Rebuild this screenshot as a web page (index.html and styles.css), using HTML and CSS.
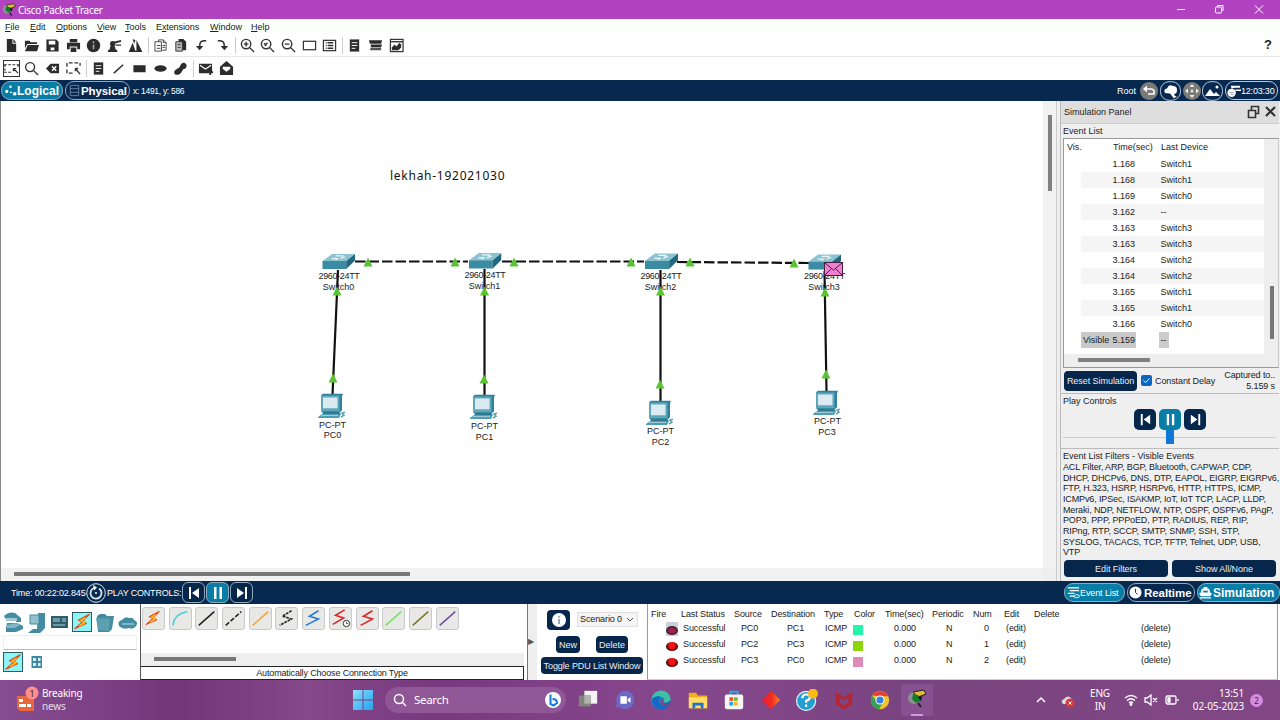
FILE: index.html
```html
<!DOCTYPE html>
<html lang="en">
<head>
<meta charset="utf-8">
<title>Cisco Packet Tracer</title>
<link rel="stylesheet" href="styles.css">
</head>
<body>
<svg class="defs" aria-hidden="true">
  <defs>
    <linearGradient id="edgeg" x1="0" y1="0" x2="1" y2="1"><stop offset="0" stop-color="#35c1b0"/><stop offset=".5" stop-color="#1b86d8"/><stop offset="1" stop-color="#0c59a4"/></linearGradient>
    <linearGradient id="wing" x1="0" y1="0" x2="1" y2="1"><stop offset="0" stop-color="#8be0fb"/><stop offset="1" stop-color="#22a2ee"/></linearGradient>
    <linearGradient id="diag" x1="0" y1="0" x2="1" y2="0"><stop offset="0" stop-color="#e81c30"/><stop offset=".55" stop-color="#f02c20"/><stop offset="1" stop-color="#f98a2c"/></linearGradient>
    <symbol id="switch" viewBox="0 0 34 17" preserveAspectRatio="none"><path d="M.500 8 10.500.500H34L25 8z" fill="#8bc3d2"/><path d="M.500 8H25v8.500H.500z" fill="#3b8ba3"/><path d="M25 8 34 .500v7l-9 9z" fill="#21687e"/><path d="M10 5.500h6l-2 1.500M14 2.500h8l-2 1M19 5.500l5-2" fill="none" stroke="#e9f6f8" stroke-width="1.200"/></symbol>
    <symbol id="pc" viewBox="0 0 28 26" preserveAspectRatio="none"><path d="M3 2 5 0h20l-1 3v14l-3 3H6l-3-2z" fill="#2d819b"/><path d="M3 2h18.500v16H3z" fill="#5fa8bb"/><path d="M5 4h14.500v11H5z" fill="#dcebf2"/><path d="M4 19h17l2 2H5z" fill="#2d7990"/><path d="m0 24 4-3h19l-2 4H0z" fill="#4f9db2"/><path d="m3 22.500 17-.2" stroke="#a5cdd8"/><path d="m27 19-3 1 2 2-3 2" stroke="#4f9db2" stroke-width="1.500" fill="none"/></symbol>
    <symbol id="up" viewBox="0 0 10 10"><path d="M5 .500 9.500 9.500H.5z" fill="#59c332"/></symbol>
    <symbol id="bolt" viewBox="0 0 20 20"><path d="M18 2 6 8.500l4.500 2L2 18l13-6-4-2.500z" fill="#ff9c13" stroke="#dc4b22" stroke-width="1.300" stroke-linejoin="round"/><path d="m14 6-5 3 4 2-6 4" fill="none" stroke="#ffb91c" stroke-width="1.800"/></symbol>
    <symbol id="prev" viewBox="0 0 16 16"><path d="M3 2h2v12H3zM13 3v10L6 8z" fill="#fff"/></symbol>
    <symbol id="pause" viewBox="0 0 16 16"><path d="M4 2h2.500v12H4zM9.500 2H12v12H9.500z" fill="#fff"/></symbol>
    <symbol id="next" viewBox="0 0 16 16"><path d="M11 2h2v12h-2zM3 3v10l7-5z" fill="#fff"/></symbol>
    <symbol id="note" viewBox="0 0 16 16"><path d="M3 1.500h10v13H3z" fill="#2c2c2c"/><path d="M5 5h6M5 8h6M5 11h4" stroke="#fff"/></symbol>
    <symbol id="ptlogo" viewBox="0 0 20 20"><circle cx="7" cy="9" r="6" fill="#8f8f8f"/><path d="M6 3 17 1l2 4-8 3z" fill="#e2bd35" stroke="#222"/><path d="m6 5 5 1 4 5-6 3-4-4z" fill="#167c29"/><path d="m11 8 4-1-1 5z" fill="#111"/><path d="m11 14 3 4" stroke="#222" stroke-width="2"/></symbol>
  </defs>
</svg>

<header class="titlebar">
  <svg class="app-icon" viewBox="0 0 20 20"><use href="#ptlogo"/></svg>
  <h1 class="title">Cisco Packet Tracer</h1>
  <svg class="win-controls" viewBox="0 0 100 19" fill="none" stroke="#fff"><path d="M1 9.500h8"/><rect x="39.500" y="7" width="6" height="6" rx="1"/><path d="M41.500 7V5.500h5.500V11M79 5.500l8 8M87 5.500l-8 8"/></svg>
</header>

<nav class="menubar">
  <span class="m-file"><u>F</u>ile</span><span class="m-edit"><u>E</u>dit</span><span class="m-opt"><u>O</u>ptions</span><span class="m-view"><u>V</u>iew</span><span class="m-tools"><u>T</u>ools</span><span class="m-ext">E<u>x</u>tensions</span><span class="m-win"><u>W</u>indow</span><span><u>H</u>elp</span>
</nav>

<div class="toolbar">
  <svg class="ti" viewBox="0 0 16 16"><path d="M3 1h6v5h4v9H3zM10 1l3 4h-3z"/></svg>
  <svg class="ti" viewBox="0 0 16 16"><path d="M1 3h5l1 1.500h7v2H3.500L1 11z"/><path d="M4 7.500h12L14 14H1z"/></svg>
  <svg class="ti" viewBox="0 0 16 16"><path fill-rule="evenodd" d="M1.500 1.500H12l2.500 2.500v10.500h-13zM4 3v4h7V3zM6 10v3h4v-3z"/></svg>
  <svg class="ti" viewBox="0 0 16 16"><path d="M4 1h8v3.500H4zM1 5h14v7h-3V9H4v3H1zM5 10h6v5H5z"/></svg>
  <svg class="ti" viewBox="0 0 16 16"><circle cx="8" cy="8" r="7.200"/><path d="M8 3.500v2M8 7v5" stroke="#aaa" stroke-width="1.600"/></svg>
  <svg class="ti" viewBox="0 0 16 16"><circle cx="6" cy="6" r="2.800"/><path d="M3 12c0-3 1-4 3-4s3 1 3 4l2 1v2H1v-2zM7 4l8-2v2l-7 2zM9 7h6v1.300H9z"/></svg>
  <svg class="ti" viewBox="0 0 16 16"><path d="m1 14 4-9 3 9zM5 1l3 1.500L6.500 6zM9 14V2l6 12zM1 13.500h14V15H1z"/></svg>
  <i class="sep"></i>
  <svg class="ti" viewBox="0 0 16 16"><path d="M2 4h7v10H2zM6 4V2h5l3 3v8H9M11 2v3h3M4 8h4M4 11h4M10 8h3M10 10h3" fill="none" stroke="#444"/></svg>
  <svg class="ti" viewBox="0 0 16 16"><path d="M6 1h5l3 3v9H6z"/><path d="M3 4h7v10H3z" fill="#bbb" stroke="#333"/><path d="M5 7h3M5 10h3" stroke="#333"/></svg>
  <svg class="ti" viewBox="0 0 16 16"><path d="M13 3c-5-.5-7 1-7 6" fill="none" stroke="#2c2c2c" stroke-width="1.600"/><path d="M2 8.500h8L6 13z"/></svg>
  <svg class="ti" viewBox="0 0 16 16"><path d="M3 3c5-.5 7 1 7 6" fill="none" stroke="#2c2c2c" stroke-width="1.600"/><path d="M6 8.500h8L10 13z"/></svg>
  <i class="sep"></i>
  <svg class="ti" viewBox="0 0 16 16" fill="none" stroke="#333" stroke-width="1.500"><circle cx="6.500" cy="6.500" r="5"/><path d="m10 10 5 5M4 6.500h5M6.500 4v5"/></svg>
  <svg class="ti" viewBox="0 0 16 16" fill="none" stroke="#333" stroke-width="1.500"><circle cx="6.500" cy="6.500" r="5"/><path d="m10 10 5 5M5 8l3-3M4.500 5.500l2 3"/></svg>
  <svg class="ti" viewBox="0 0 16 16" fill="none" stroke="#333" stroke-width="1.500"><circle cx="6.500" cy="6.500" r="5"/><path d="m10 10 5 5M4 6.500h5"/></svg>
  <svg class="ti" viewBox="0 0 16 16"><rect x="1.500" y="3.500" width="13" height="9" fill="#fff" stroke="#333" stroke-width="1.300"/></svg>
  <svg class="ti" viewBox="0 0 16 16"><rect x="1.500" y="2.500" width="13" height="11" fill="#fff" stroke="#333" stroke-width="1.300"/><path d="M4 5h1M4 8h1M4 11h1M6 5h6M6 8h6M6 11h6" stroke="#333" stroke-width="1.500"/></svg>
  <i class="sep"></i>
  <svg class="ti" viewBox="0 0 16 16"><use href="#note"/></svg>
  <svg class="ti" viewBox="0 0 16 16"><path d="M1 2.500h14L14 6H2z"/><path d="M3 7h12l-1 2.500H3z"/><path d="M3 10h11v3H2z" fill="#555"/></svg>
  <svg class="ti" viewBox="0 0 16 16"><rect x="1.500" y="1.500" width="13.500" height="13" fill="#fff" stroke="#333" stroke-width="1.300"/><path d="M2 4h13" stroke="#333" stroke-width="1.500"/><path d="M3 13v-3l3-3 2 2 3-4 2 2v3l-3 3z"/></svg>
  <b class="help">?</b>
</div>

<div class="toolbar second">
  <svg class="ti picked" viewBox="0 0 16 16" fill="none" stroke="#333" stroke-width="1.300"><path d="M0 4h16M0 12h9" stroke-dasharray="3 1.500"/><path d="M1 4v8M15 4v4" stroke-dasharray="2 2"/><path d="m10 8 5 5M10 8v3M10 8h3"/></svg>
  <svg class="ti" viewBox="0 0 16 16" fill="none" stroke="#333" stroke-width="1.500"><circle cx="6.500" cy="6.500" r="4.800"/><path d="m10 10 5 5"/></svg>
  <svg class="ti" viewBox="0 0 16 16"><path d="m1 8 5-5h9v10H6z"/><path d="m7.500 5.500 4.500 5M12 5.500l-4.500 5" stroke="#fff" stroke-width="1.500"/></svg>
  <svg class="ti" viewBox="0 0 16 16" fill="none" stroke="#333" stroke-width="1.400"><path d="M1 6V2h14v3M1 9v4h8" stroke-dasharray="4 2"/><path d="m10 8 5 6M10 8v3M10 8h3"/></svg>
  <i class="sep"></i>
  <svg class="ti" viewBox="0 0 16 16"><use href="#note"/></svg>
  <svg class="ti" viewBox="0 0 16 16"><path d="M3 13 13 4" stroke="#333" stroke-width="1.700"/></svg>
  <svg class="ti" viewBox="0 0 16 16"><rect x="1.500" y="4.500" width="13" height="7.500"/></svg>
  <svg class="ti" viewBox="0 0 16 16"><ellipse cx="8" cy="8" rx="6.500" ry="3.500"/></svg>
  <svg class="ti" viewBox="0 0 16 16"><path d="M9 3c3-3 7 1 5 4-1 2-3 1-4 3-1 4-6 6-8 4-2-3 1-5 3-6 3-1 2-3 4-5z"/></svg>
  <i class="sep"></i>
  <svg class="ti" viewBox="0 0 16 16"><path d="M1 3h14v8h1v2h-2v2h-2v-2H1z"/><path d="m2 4.500 6 4 6-4" fill="none" stroke="#fff" stroke-width="1.200"/></svg>
  <svg class="ti" viewBox="0 0 16 16"><path d="m8 0 7 6v9H1V6z"/><path d="M4 6h8v2.500l-4 3-4-3z" fill="#fff"/></svg>
</div>

<div class="navybar views">
  <div class="tab on logical"><svg viewBox="0 0 14 14"><circle cx="3" cy="8" r="1.700"/><circle cx="7" cy="3" r="1.300"/><circle cx="7.500" cy="9" r="1"/><circle cx="11.500" cy="10.500" r="2"/></svg>Logical</div>
  <div class="tab physical"><svg viewBox="0 0 14 14" fill="none" stroke="#6681a0"><path d="M2.500 1.500h9v11h-9zM2 5h10M2 9h10"/></svg>Physical</div>
  <span class="coords">x: 1491, y: 586</span>
  <span class="root">Root</span>
  <svg class="nav-tools" viewBox="0 0 86 20"><circle cx="10" cy="10" r="9" fill="#7b7a76"/><path d="M8 4.500 4 8l4 3.500z" fill="#fff"/><path d="M6 8h6q4 0 3 5H9" fill="none" stroke="#fff" stroke-width="1.600"/><rect x="21.500" y=".7" width="20" height="18.600" rx="8.500" fill="none" stroke="#b6c6d6"/><path d="M26 12q-2-4 2-4.500 2-5 6-2.500 4 0 4 4t-3 4l1 2h2l-3 2.500-4-5z" fill="#fff"/><circle cx="53" cy="10" r="9" fill="#7b7a76"/><path d="m53 3 2.500 3h-5zM53 17l2.500-3h-5zM46 10l3-2.500v5zM60 10l-3-2.500v5z" fill="#eee"/><circle cx="53" cy="10" r="1.600" fill="#ddd"/><rect x="63.500" y=".7" width="20" height="18.600" rx="8.500" fill="none" stroke="#b6c6d6"/><path d="m66 15 5-7 4 5 2-2 4 4z" fill="#fff"/><circle cx="78" cy="6" r="1.500" fill="#fff"/></svg>
  <div class="clock"><svg viewBox="0 0 16 16"><circle cx="6" cy="10.500" r="4.500" fill="#fff"/><path d="M4 10h4M5 12h3" fill="none" stroke="#8b9bb0"/><path d="M5 3h10v2H9L6 6zM10 7h6v1.500h-6z" fill="#fff"/></svg>12:03:30</div>
</div>

<main class="main">
  <section class="workspace">
    <svg class="canvas" viewBox="1 101 1042 467">
      <g stroke="#111" stroke-width="2.200" stroke-dasharray="10.500 3" fill="none"><path d="M355 261.500H468M502 261.500H644M677 262l132 1"/></g>
      <g><use href="#switch" x="322" y="253.500" width="33" height="16"/><use href="#switch" x="468.500" y="252.500" width="33" height="16.500"/><use href="#switch" x="644.500" y="253" width="33.500" height="16.500"/><use href="#switch" x="808" y="254" width="33" height="16"/></g>
      <g class="label"><text class="model" x="339" y="278.500">2960-24TT</text><text x="338.500" y="289.500">Switch0</text><text class="model" x="485" y="278">2960-24TT</text><text x="484.500" y="289">Switch1</text><text class="model" x="661" y="278.500">2960-24TT</text><text x="660.500" y="290">Switch2</text><text class="model" x="824.500" y="279">2960-24TT</text><text x="824" y="290">Switch3</text><text x="332.500" y="427.500">PC-PT</text><text x="332.500" y="438">PC0</text><text x="484.500" y="428.500">PC-PT</text><text x="484.500" y="439.500">PC1</text><text x="660.500" y="434">PC-PT</text><text x="660.500" y="445">PC2</text><text x="827.500" y="424">PC-PT</text><text x="827" y="435">PC3</text></g>
      <path d="M338 270 332.500 395M484.500 269V395M660.500 270V401M824.500 271 826.500 391" stroke="#111" stroke-width="2.200" fill="none"/>
      <g><use href="#pc" x="318" y="393.500" width="28" height="25.500"/><use href="#pc" x="470" y="394.500" width="28" height="25.500"/><use href="#pc" x="646" y="400.500" width="28" height="25.500"/><use href="#pc" x="813" y="390.500" width="28" height="25.500"/></g>
      <g><use href="#up" x="363" y="257" width="10" height="10"/><use href="#up" x="450" y="257" width="10" height="10"/><use href="#up" x="509" y="257" width="10" height="10"/><use href="#up" x="626" y="257" width="10" height="10"/><use href="#up" x="685" y="257" width="10" height="10"/><use href="#up" x="789" y="258" width="10" height="10"/><use href="#up" x="332" y="286" width="10" height="10"/><use href="#up" x="479.500" y="286" width="10" height="10"/><use href="#up" x="655.500" y="286" width="10" height="10"/><use href="#up" x="820" y="287" width="10" height="10"/><use href="#up" x="328" y="373" width="10" height="10"/><use href="#up" x="479" y="374" width="10" height="10"/><use href="#up" x="655" y="379" width="10" height="10"/><use href="#up" x="821" y="369" width="10" height="10"/></g>
      <rect x="824.500" y="262.500" width="18" height="13" fill="#ed80cf" stroke="#4a1e42"/><path d="m825 263 8.500 7 8.500-7M825 275l6-6M842 275l-6-6" fill="none" stroke="#4a1e42"/>
      <text class="note" x="390" y="179.500" textLength="114.500">lekhah-192021030</text>
    </svg>
    <div class="vscroll"><i></i></div>
    <div class="hscroll"><i></i></div>
  </section>

  <aside class="panel">
    <header class="panel-head"><span>Simulation Panel</span><svg viewBox="0 0 30 14" fill="none" stroke="#333"><path d="M1.500 5.500h7v7h-7zM4.500 5V1.500h7v7H9" stroke-width="1.600"/><path d="m19 2 9 9M28 2l-9 9" stroke-width="2.200"/></svg></header>
    <h2 class="sub">Event List</h2>
    <div class="events">
      <div class="rows">
        <div class="ev head"><span>Vis.</span><span>Time(sec)</span><span>Last Device</span></div>
        <div class="ev"><span></span><span>1.168</span><span>Switch1</span></div>
        <div class="ev"><span></span><span>1.168</span><span>Switch1</span></div>
        <div class="ev"><span></span><span>1.169</span><span>Switch0</span></div>
        <div class="ev"><span></span><span>3.162</span><span>--</span></div>
        <div class="ev"><span></span><span>3.163</span><span>Switch3</span></div>
        <div class="ev"><span></span><span>3.163</span><span>Switch3</span></div>
        <div class="ev"><span></span><span>3.164</span><span>Switch2</span></div>
        <div class="ev"><span></span><span>3.164</span><span>Switch2</span></div>
        <div class="ev"><span></span><span>3.165</span><span>Switch1</span></div>
        <div class="ev"><span></span><span>3.165</span><span>Switch1</span></div>
        <div class="ev"><span></span><span>3.166</span><span>Switch0</span></div>
        <div class="ev current"><span>Visible</span><span>5.159</span><span><em>--</em></span></div>
      </div>
      <div class="ev-v"><i></i></div>
      <div class="ev-h"><i></i></div>
    </div>
    <div class="reset-row">
      <button class="btn reset">Reset Simulation</button>
      <svg class="check" viewBox="0 0 11 11"><rect width="11" height="11" rx="2" fill="#0f66c0"/><path d="m2.500 5.500 2 2 4-4" fill="none" stroke="#fff"/></svg>
      <span class="delay">Constant Delay</span>
      <span class="captured">Captured to..<br>5.159 s</span>
    </div>
    <div class="play">
      <h2 class="sub">Play Controls</h2>
      <div class="play-btns"><button class="pb"><svg viewBox="0 0 16 16"><use href="#prev"/></svg></button><button class="pb on"><svg viewBox="0 0 16 16"><use href="#pause"/></svg></button><button class="pb"><svg viewBox="0 0 16 16"><use href="#next"/></svg></button></div>
      <div class="slider"><i></i></div>
    </div>
    <div class="filters">
      <h2 class="sub">Event List Filters - Visible Events</h2>
      <p>ACL Filter, ARP, BGP, Bluetooth, CAPWAP, CDP,<br>DHCP, DHCPv6, DNS, DTP, EAPOL, EIGRP, EIGRPv6,<br>FTP, H.323, HSRP, HSRPv6, HTTP, HTTPS, ICMP,<br>ICMPv6, IPSec, ISAKMP, IoT, IoT TCP, LACP, LLDP,<br>Meraki, NDP, NETFLOW, NTP, OSPF, OSPFv6, PAgP,<br>POP3, PPP, PPPoED, PTP, RADIUS, REP, RIP,<br>RIPng, RTP, SCCP, SMTP, SNMP, SSH, STP,<br>SYSLOG, TACACS, TCP, TFTP, Telnet, UDP, USB,<br>VTP</p>
      <div class="filter-btns"><button class="btn">Edit Filters</button><button class="btn">Show All/None</button></div>
    </div>
  </aside>
</main>

<div class="navybar controls">
  <span class="time">Time: 00:22:02.845</span>
  <svg class="cycle" viewBox="0 0 20 20" fill="none" stroke="#dce6ef"><circle cx="10" cy="10" r="9.300"/><path d="M8 5a5.500 5.500 0 1 0 5 .5" stroke-width="1.800"/><path d="m7 2 4 2.500-3 3z" fill="#fff" stroke="none"/><circle cx="10" cy="10" r=".7" fill="#fff"/></svg>
  <span class="pc-label">PLAY CONTROLS:</span>
  <button class="rb"><svg viewBox="0 0 16 16"><use href="#prev"/></svg></button><button class="rb on"><svg viewBox="0 0 16 16"><use href="#pause"/></svg></button><button class="rb"><svg viewBox="0 0 16 16"><use href="#next"/></svg></button>
  <div class="modes">
    <div class="tab on evl"><svg viewBox="0 0 14 14" fill="none" stroke="#fff"><path d="M1 2h12M3 5h10M1 8h7M3 11h5" stroke-width="1.300"/><ellipse cx="10.500" cy="11" rx="3" ry="1.600"/></svg>Event List</div>
    <div class="tab real"><svg viewBox="0 0 14 14"><circle cx="7" cy="7" r="6.500"/><path d="M7 3v4l2 2" fill="none" stroke="#0a2a50"/></svg>Realtime</div>
    <div class="tab on sim"><svg viewBox="0 0 14 14"><path d="M5 1h4v2h2l1 4 2 1-2 3H2L0 8l2-1 1-4h2zM1 12h12v1.500H1z"/><path d="M4.500 5h5v2h-5z" fill="#0b7fa8"/></svg>Simulation</div>
  </div>
</div>

<section class="bottom">
  <div class="devices">
    <svg class="dev-row" viewBox="0 0 140 40"><path d="M4 12q5-5 11-3l6 5v4h-5v-4H9l-2 3z" fill="#438ca1"/><path d="M6 14h11v3H6z" fill="#9ecbd4"/><path d="M7 19h10l6 3v3l-7 3H6v-4z" fill="#438ca1"/><path d="m7 21 9-2 4 2-5 3H7z" fill="#7fb6c4"/><g fill="#438ca1"><path d="M38 9h7v15l-5 5H28l5-4h4z"/><path d="M30 11h9v9h-9z" fill="#91c1ce" stroke="#438ca1"/><path d="M51 12h17v12H51z" fill="#315d6b"/><path d="M53 14h7v4h-7zM62 14h4v4h-4zM53 20h12v2H53z" fill="#6c9aa5"/><path d="m97 12 3-2h5l2 2h7l-2 13-3 3H98z"/><path d="m96 14 14 1-1 12-11-1z" fill="#5c9fb0"/><path d="M119 22q-2-5 3-6 3-4 7-2 4-1 5 2 5 2 2 6-3 4-7 2-6 2-10-2z"/><path d="M122 20h12" stroke="#7fb6c4" stroke-width="2"/></g><rect x="72.500" y="8.500" width="19" height="19" fill="#8ff4f5" stroke="#285e68"/><use href="#bolt" x="73" y="8" width="18" height="19"/></svg>
    <div class="dev-blank"></div>
    <svg class="dev-row low" viewBox="0 0 140 30"><rect x="3.500" y="1.500" width="19" height="19" fill="#8ff4f5" stroke="#285e68"/><use href="#bolt" x="4" y="2" width="18" height="18"/><path d="M31.500 5h10.500v12H31.500z" fill="#3d88a3"/><path d="M33 7h3v3h-3zM38 7h2.500v3H38zM33 12h3v3h-3zM38 12h2.500v3H38z" fill="#d8ecf1"/></svg>
  </div>
  <div class="connections">
    <div class="wires">
      <svg viewBox="0 0 23 23"><use href="#bolt" x="1" y="2" width="19" height="18"/></svg>
      <svg viewBox="0 0 23 23"><path d="M3 19Q5 6 19 4" stroke="#50cfd9"/></svg>
      <svg viewBox="0 0 23 23"><path d="M3 19 20 4" stroke="#222"/></svg>
      <svg viewBox="0 0 23 23"><path d="M3 19 20 4" stroke="#222" stroke-dasharray="5 2"/></svg>
      <svg viewBox="0 0 23 23"><path d="M3 19 20 4" stroke="#efa43a"/></svg>
      <svg viewBox="0 0 23 23"><path d="m17 3-10 6 10 3-13 7" stroke="#222" stroke-dasharray="3 1"/></svg>
      <svg viewBox="0 0 23 23"><path d="m17 3-10 6 10 3L3 19" stroke="#2779d3"/></svg>
      <svg viewBox="0 0 23 23"><path d="m16 2-10 6 9 3L3 18" stroke="#dc2727"/><circle cx="18" cy="17" r="3.500" fill="#fff" stroke="#222" stroke-width="1"/><path d="M18 15v2h2" stroke="#222" stroke-width=".8"/></svg>
      <svg viewBox="0 0 23 23"><path d="m17 3-10 6 10 3L4 19" stroke="#dc2727"/></svg>
      <svg viewBox="0 0 23 23"><path d="M3 19 20 4" stroke="#76e45c"/></svg>
      <svg viewBox="0 0 23 23"><path d="M3 19 20 4" stroke="#777a28"/></svg>
      <svg viewBox="0 0 23 23"><path d="M3 19 20 4" stroke="#7250a4"/></svg>
    </div>
    <div class="wire-scroll"><i></i></div>
    <div class="wire-name">Automatically Choose Connection Type</div>
  </div>
  <div class="splitter">▶</div>
  <div class="scenario">
    <div class="sc-row"><button class="btn info"><svg viewBox="0 0 16 16"><circle cx="8" cy="8" r="7" fill="#fff"/><path d="M8 4v1.500M8 7v5" stroke="#617b98" stroke-width="1.300"/></svg></button><div class="select">Scenario 0<svg viewBox="0 0 8 6" fill="none" stroke="#555"><path d="m1 1 3 3 3-3"/></svg></div></div>
    <div class="sc-row two"><button class="btn new">New</button><button class="btn del">Delete</button></div>
    <button class="btn toggle">Toggle PDU List Window</button>
  </div>
  <div class="pdu">
    <div class="pr ph"><span>Fire</span><span>Last Status</span><span>Source</span><span>Destination</span><span>Type</span><span>Color</span><span>Time(sec)</span><span>Periodic</span><span>Num</span><span>Edit</span><span>Delete</span></div>
    <div class="pr"><span class="fire first"><i></i></span><span>Successful</span><span>PC0</span><span>PC1</span><span>ICMP</span><span><i class="sw mint"></i></span><span>0.000</span><span>N</span><span>0</span><span>(edit)</span><span>(delete)</span></div>
    <div class="pr"><span class="fire"><i></i></span><span>Successful</span><span>PC2</span><span>PC3</span><span>ICMP</span><span><i class="sw lime"></i></span><span>0.000</span><span>N</span><span>1</span><span>(edit)</span><span>(delete)</span></div>
    <div class="pr"><span class="fire"><i></i></span><span>Successful</span><span>PC3</span><span>PC0</span><span>ICMP</span><span><i class="sw pink"></i></span><span>0.000</span><span>N</span><span>2</span><span>(edit)</span><span>(delete)</span></div>
  </div>
</section>

<footer class="taskbar">
  <svg class="news" viewBox="0 0 26 28"><path d="M3 11h17v15H6l-3-3z" fill="#e8673d"/><path d="M5 14h4v3H5zM5 19h7v3H5zM13 19h4v3h-4z" fill="#fff"/><circle cx="18" cy="8" r="6.500" fill="#ff8f8c"/><text x="18" y="11.500" text-anchor="middle" font-size="9" fill="#4b2020">1</text></svg>
  <div class="news-text">Breaking<br><span>news</span></div>
  <svg class="start" viewBox="0 0 20 20"><path d="M0 0h9.500v9.500H0zM10.500 0H20v9.500h-9.500zM0 10.500h9.500V20H0zM10.500 10.500H20V20h-9.500z" fill="url(#wing)"/></svg>
  <div class="search"><svg viewBox="0 0 14 14" fill="none" stroke="#fff" stroke-width="1.500"><circle cx="6" cy="6" r="4.500"/><path d="m9 9 4 4"/></svg><span>Search</span><svg class="bing" viewBox="0 0 18 18"><circle cx="9" cy="9" r="8" fill="#f7fbff"/><path d="M6.500 3.500v9.500l3 1.500 3.500-2.500c0-3-2-4-4.500-4" fill="none" stroke="#1678d8" stroke-width="2"/></svg></div>
  <div class="apps">
    <svg viewBox="0 0 24 24"><path d="M8 2h14v14H8z" fill="#f4f4f4"/><path d="M2 7h13v12H2z" fill="#82847f"/><path d="M8 7h7v9H8z" fill="#b2b5ae"/></svg>
    <svg viewBox="0 0 24 24"><path d="M12 2a10 10 0 1 1-7 17l-3 2 1-6a10 10 0 0 1 9-13z" fill="#6d68c6"/><path d="M7 8h7v8H7zM15 11l3-2v6l-3-2z" fill="#fff"/></svg>
    <svg viewBox="0 0 24 24"><circle cx="12" cy="12" r="10.500" fill="url(#edgeg)"/><path d="M1.500 13Q2 3 12 1.500q9 .5 10.500 9-1 5-8 4 3-4-2-6-6-2-11 4.500z" fill="#3cc2a2"/><path d="M2 11q5-5 10-2-5 4 0 9 4 3 8 0-6 7-13 3-5-4-5-10z" fill="#1668c2"/><path d="M12.500 10q3 1 1 4 3 3 8 1l-2 3q-6 1-8-2-1-3 1-6z" fill="#7e4487"/></svg>
    <svg viewBox="0 0 24 24"><path d="M2 4h8l2 3h10v14H2z" fill="#f2ad1d"/><path d="M2 9h20v12H2z" fill="#ffdb68"/><path d="M6 15h12v6h-3v-3H9v3H6z" fill="#1975d0"/></svg>
    <svg viewBox="0 0 24 24"><path d="M8 7V3h8v4" fill="none" stroke="#2daae5" stroke-width="2"/><rect x="2" y="6" width="20" height="16" rx="2" fill="#f6f5f2"/><path d="M7 9h4v4H7z" fill="#ef5427"/><path d="M12 9h4v4h-4z" fill="#7cb53a"/><path d="M7 14h4v4H7z" fill="#25a2dc"/><path d="M12 14h4v4h-4z" fill="#f5b729"/></svg>
    <svg viewBox="0 0 24 24"><path d="m12 2 10 10-10 10L2 12z" fill="url(#diag)"/></svg>
    <svg viewBox="0 0 24 24"><circle cx="11" cy="13" r="11" fill="#e6f5fb"/><circle cx="11" cy="13" r="9.700" fill="#249ed4"/><path d="M7 10q0-4 4-4 5 0 4 4-1 2-4 3v2M11 17v2.500" fill="none" stroke="#fff" stroke-width="2.400"/><circle cx="18.500" cy="5" r="5.500" fill="#fbb914"/></svg>
    <svg viewBox="0 0 24 24"><path d="m3 3 9 6 9-6v14l-9 5-9-5zM7 9v6l5 3 5-3V9l-5 3z" fill="#b62631" fill-rule="evenodd"/></svg>
    <svg viewBox="0 0 24 24"><circle cx="12" cy="12" r="10" fill="#f2c42d"/><path d="M3.300 7A10 10 0 0 1 21 8h-9z" fill="#e64132"/><path d="M3.300 7A10 10 0 0 0 11 22l4-7-6-1z" fill="#34a154"/><circle cx="12" cy="12" r="5" fill="#fff"/><circle cx="12" cy="12" r="3.900" fill="#367fe5"/></svg>
    <div class="running"><svg viewBox="0 0 20 20"><use href="#ptlogo"/></svg></div>
  </div>
  <svg class="tray" viewBox="0 0 40 20"><path d="m2 12 4-4 4 4" fill="none" stroke="#fff" stroke-width="1.500"/><path d="M28 14q-3-3 1-5 4-5 8 0l2 5z" fill="#ddd"/><circle cx="35" cy="13" r="4.500" fill="#d43b40"/><path d="m33.500 11.500 3 3M36.500 11.500l-3 3" stroke="#fff"/></svg>
  <div class="lang">ENG<br>IN</div>
  <svg class="status" viewBox="0 0 56 16" fill="none" stroke="#fff" stroke-width="1.300"><path d="M2 6q6-5 12 0M4 8.500q4-3.500 8 0M6 11q2-2 4 0"/><circle cx="8" cy="12.500" r=".8" fill="#fff"/><path d="M22 6h2l4-3v10l-4-3h-2zM30 6l4 4M34 6l-4 4"/><rect x="43" y="4" width="10" height="8" rx="1.500"/><path d="M45 6h2v4h-2zM55 7v2" fill="#fff"/></svg>
  <div class="date">13:51<br>02-05-2023</div>
  <div class="count">2</div>
</footer>
</body>
</html>
```
FILE: styles.css
```css
* { box-sizing: border-box; }
body { margin: 0; width: 1280px; height: 720px; overflow: hidden; background: #fff; color: #222; font: 9px/12px "Liberation Sans", Arial, sans-serif; display: flex; flex-direction: column; }
svg { display: block; flex: none; }
button { font: inherit; border: 0; padding: 0; display: flex; align-items: center; justify-content: center; flex: none; }
h1, h2, p { margin: 0; font: inherit; }
.defs { position: absolute; width: 0; height: 0; }

.titlebar { height: 19px; flex: none; background: #b143c1; color: #fff; display: flex; align-items: center; padding-left: 2px; }
.app-icon { width: 14px; height: 14px; }
.title { font: 10px/18px "Noto Sans", sans-serif; letter-spacing: -.28px; margin-left: 2px; }
.win-controls { width: 100px; height: 19px; margin-left: auto; margin-right: 4px; }
.menubar { height: 15px; flex: none; display: flex; align-items: center; padding-left: 5px; background: #fbfffa; }
.menubar span { white-space: nowrap; }
.m-file { width: 25px; } .m-edit { width: 26px; } .m-opt { width: 41px; } .m-view { width: 28px; } .m-tools { width: 31px; } .m-ext { width: 54px; letter-spacing: -.1px; } .m-win { width: 41px; }
.toolbar { height: 23px; flex: none; display: flex; align-items: center; border-bottom: 1px solid #e6e6e6; padding-left: 3.500px; }
.ti { width: 15px; height: 15px; margin-right: 5.700px; fill: #2c2c2c; }
.ti[fill="none"] { fill: none; }
.sep { width: 1px; height: 17px; background: #ccc; margin: 0 4px 0 -.700px; }
.help { margin: 0 8px 0 auto; font-size: 13px; }
.second { border: 0; }
.picked { outline: 1px solid #333; }

.navybar { background: #08294f; color: #fff; display: flex; align-items: center; flex: none; }
.views { height: 21px; }
.tab { border: 1px solid #8fa9bf; border-radius: 9px; display: flex; align-items: center; font-weight: bold; color: #fff; height: 19px; white-space: nowrap; flex: none; }
.tab svg { width: 13px; height: 13px; fill: #fff; }
.tab svg[fill="none"] { fill: none; }
.on { background: #087da6; }
.logical { width: 62px; font-size: 12px; padding-left: 2px; margin-left: 1px; }
.physical { width: 65px; margin-left: 2px; font-size: 11.500px; padding-left: 2px; letter-spacing: -.1px; }
.coords { margin-left: 3px; font-size: 8.500px; letter-spacing: -.3px; }
.root { margin-left: auto; margin-right: 3px; }
.nav-tools { width: 86px; height: 20px; }
.clock { width: 53px; height: 19px; border: 1px solid #b6c6d6; border-radius: 9px; display: flex; align-items: center; letter-spacing: -.2px; margin-right: 2px; }
.clock svg { width: 15px; height: 15px; }

.main { height: 480px; flex: none; display: flex; background: #efefef; }
.workspace { width: 1057px; border-left: 1px solid #888; border-right: 1px solid #ccc; display: grid; grid-template: 467px 13px / 1042px 13px; background: #eee; flex: none; }
.canvas { width: 1042px; height: 467px; background: #fff; }
.label { font-size: 9px; text-anchor: middle; fill: #222; }
.model { letter-spacing: -.35px; }
.note { font: 12px "Noto Sans", sans-serif; fill: #111; }
.vscroll { background: #f2f2f2; padding: 14px 4px 0 5px; }
.vscroll i { display: block; height: 76px; background: #808080; }
.hscroll { background: #f2f2f2; padding: 4px 0 0 13px; }
.hscroll i { display: block; width: 396px; height: 4px; background: #777; }

.panel { width: 219px; margin-left: 3px; border-left: 1px solid #bbb; display: flex; flex-direction: column; flex: none; }
.panel-head { height: 23px; background: #dedede; display: flex; align-items: center; justify-content: space-between; padding: 0 2px 0 3px; border-bottom: 1px solid #ccc; flex: none; }
.panel-head svg { width: 30px; height: 14px; }
.sub { height: 14px; line-height: 14px; padding-left: 2px; flex: none; }
.events { height: 230px; width: 216px; margin-left: 2px; border: 1px solid #999; border-right-color: #ccc; flex: none; display: grid; grid-template: 215px 13px / 200px 14px; background: #eee; }
.rows { background: #fff; }
.ev { height: 16px; margin-left: 17px; display: grid; grid-template-columns: 31.500px 48px 1fr; line-height: 16px; }
.ev.head { height: 17px; margin-left: 3px; grid-template-columns: 46px 48px 1fr; }
.ev:nth-child(odd):not(.head) { background: #f5f5f5; }
.ev.current { background: #fff; }
.ev.current:nth-child(odd) { background: #fff; }
.ev.current span:nth-child(-n+2) { background: #c9c9c9; }
.ev.current span:nth-child(1) { padding-left: 2px; }
.ev.current span:nth-child(2) { width: 23px; }
.ev.current em { background: #ccc; font-style: normal; display: inline-block; padding: 0 2px; margin-left: -2px; }
.ev-v { padding: 147px 5px 0 6px; }
.ev-v i { display: block; height: 53px; width: 4px; background: #777; }
.ev-h { padding: 4px 0 0 14px; }
.ev-h i { display: block; height: 4px; width: 72px; background: #808080; }
.btn { background: #07264b; color: #e9eff5; border-radius: 4px; white-space: nowrap; }
.reset-row { height: 26px; display: flex; align-items: center; border-bottom: 1px solid #bbb; padding: 0 4px 0 3px; flex: none; }
.reset { width: 73px; height: 20px; letter-spacing: -.05px; }
.check { width: 11px; height: 11px; margin: 0 3px 0 4px; }
.delay { letter-spacing: -.1px; }
.captured { margin-left: auto; text-align: right; line-height: 10.500px; white-space: nowrap; letter-spacing: -.1px; }
.play { height: 55px; border-bottom: 1px solid #bbb; flex: none; }
.play-btns { display: flex; gap: 3px; padding-left: 73px; margin-top: 1px; }
.pb { width: 22px; height: 21px; border-radius: 5px; background: #07264b; }
.pb svg { width: 15px; height: 15px; }
.pb.on, .rb.on { background: #087da6; }
.slider { height: 15px; padding-left: 105px; background: linear-gradient(#ccc, #ccc) 2px 7px / 213px 1px no-repeat; }
.slider i { display: block; width: 8px; height: 14px; background: #0f78d4; }
.filters .sub { height: 13px; line-height: 15px; }
.filters p { padding-left: 2px; line-height: 10.670px; height: 98px; letter-spacing: -.13px; white-space: nowrap; }
.filter-btns { display: flex; gap: 4px; padding-left: 3px; }
.filter-btns .btn { width: 104px; height: 17px; letter-spacing: -.05px; }

.controls { height: 23px; padding-left: 11px; }
.time { width: 75px; white-space: nowrap; letter-spacing: -.15px; }
.cycle { width: 20px; height: 20px; }
.pc-label { width: 76px; padding-left: 1px; white-space: nowrap; letter-spacing: -.2px; }
.rb { width: 23px; height: 21px; margin-right: 1px; border: 1px solid #8fa9bf; border-radius: 6px; background: #07264b; }
.rb svg { width: 16px; height: 16px; }
.modes { margin-left: auto; display: flex; gap: 2px; }
.evl { width: 61px; font-weight: normal; padding-left: 2px; letter-spacing: -.1px; }
.real { width: 68px; font-size: 11.500px; padding-left: 1px; gap: 2px; letter-spacing: -.05px; }
.sim { width: 83px; font-size: 12px; padding-left: 1px; gap: 1px; }

.bottom { height: 76px; flex: none; display: flex; background: #fff; overflow: hidden; }
.devices { width: 140px; flex: none; }
.dev-row { width: 140px; height: 30px; }
svg.dev-row:first-child { height: 40px; margin-bottom: -9px; }
.dev-blank { height: 15px; margin: 0 3px; border: 1px solid #eee; border-bottom-color: #bbb; }
.low { margin-top: 1px; }
.connections { width: 384px; border-left: 1px solid #555; flex: none; display: flex; flex-direction: column; }
.wires { height: 49px; display: flex; gap: 3.700px; padding: 3px 0 0 1px; }
.wires svg { width: 23px; height: 23px; border: 1px solid #c9c9c9; border-radius: 3px; background: #e8e8e6; fill: none; stroke-width: 1.700; }
.wire-scroll { height: 13px; background: #eee; padding: 4px 0 0 13px; }
.wire-scroll i { display: block; width: 82px; height: 4px; background: #777; }
.wire-name { height: 14px; border: 1px solid #222; border-left: 0; text-align: center; background: #fff; letter-spacing: -.15px; }
.splitter { width: 10px; margin-left: 3px; border-left: 1px solid #777; background: #eee; font: 8px/76px "DejaVu Sans", sans-serif; color: #555; flex: none; }
.scenario { width: 110px; padding: 5px 0 0 4px; flex: none; }
.sc-row { display: flex; align-items: center; height: 21px; padding-left: 6px; }
.info { width: 23px; height: 20px; }
.info svg { width: 16px; height: 16px; }
.select { margin-left: 7px; width: 61px; height: 15px; background: #f4f4f4; border: 1px solid #e0e0e0; line-height: 13px; padding: 0 3px 0 2px; display: flex; align-items: center; justify-content: space-between; white-space: nowrap; letter-spacing: -.1px; }
.select svg { width: 8px; height: 6px; }
.two { height: 25px; padding: 2px 0 0 15px; margin-top: 1px; }
.new { width: 24px; height: 17px; }
.del { width: 32px; height: 17px; margin-left: 16px; }
.toggle { width: 102px; height: 17px; margin-top: 1px; letter-spacing: -.1px; }
.pdu { width: 631px; border-left: 1px solid #8e9aa6; border-right: 1px solid #8e9aa6; border-bottom: 1px solid #ccd; padding-top: 3px; flex: none; }
.pr { display: grid; grid-template-columns: 35px 49px 37px 56px 24px 45px 43px 47px 22px 135px 1fr; height: 16px; line-height: 12px; white-space: nowrap; letter-spacing: -.1px; }
.ph { height: 15px; line-height: 14px; padding-left: 3px; grid-template-columns: 30px 53px 37px 53px 30px 31px 47px 41px 31px 30px 1fr; }
.pr:not(.ph) span:nth-child(3), .pr:not(.ph) span:nth-child(4) { text-align: center; }
.pr:not(.ph) span:nth-child(3) { width: 35px; }
.pr:not(.ph) span:nth-child(4) { width: 53px; }
.pr:not(.ph) span:nth-child(8) { padding-left: 9px; }
.fire { height: 14px; width: 12px; margin-left: 18px; display: flex; align-items: center; }
.fire i { width: 12px; height: 9px; border-radius: 50%; background: radial-gradient(circle at 50% 40%, #f01414 35%, #200 75%); margin-top: 3px; }
.fire.first { background: #ccd2db; }
.fire.first i { background: radial-gradient(#a52147 30%, #223 75%); }
.sw { display: block; width: 10px; height: 10px; margin: 3px 0 0 4px; }
.mint { background: #24f3ac; } .lime { background: #8bd50d; } .pink { background: #de8abb; }

.taskbar { height: 40px; flex: none; display: flex; align-items: center; color: #fff; font-family: "Noto Sans", sans-serif; font-size: 10px; background: linear-gradient(90deg, #874d91, #713779 14%, #85488a 24%, #78397e 34%, #86478d 52%, #79447f 72%, #824886); }
.news { width: 26px; height: 28px; margin-left: 14px; margin-top: -3px; }
.news-text { width: 80px; margin-left: 2px; line-height: 13px; font-size: 10px; letter-spacing: -.2px; }
.news-text span { opacity: .8; }
.start { width: 20px; height: 20px; margin-left: 231px; }
.search { width: 181px; height: 26px; margin-left: 12px; border-radius: 13px; background: #905797; display: flex; align-items: center; padding-left: 8px; font-size: 11.500px; letter-spacing: -.3px; }
.search > svg:first-child { width: 14px; height: 14px; margin-right: 7px; }
.search .bing { width: 18px; height: 18px; margin: 0 4px 0 auto; }
.apps { display: flex; margin-left: 11px; gap: 14.500px; align-items: center; }
.apps > svg { width: 22px; height: 22px; }
.running { width: 32px; height: 32px; background: #875090; border-radius: 3px; padding: 5px 6px; margin-left: -5px; background-image: linear-gradient(#dc94dc, #dc94dc); background-size: 12px 2px; background-position: 50% 100%; background-repeat: no-repeat; }
.running svg { width: 20px; height: 20px; }
.tray { width: 40px; height: 20px; margin-left: auto; }
.lang { width: 24px; margin-left: 13px; text-align: center; line-height: 13px; letter-spacing: -.2px; }
.status { width: 56px; height: 16px; margin-left: 11px; }
.date { width: 56px; margin-left: 9px; text-align: right; line-height: 13px; letter-spacing: -.1px; white-space: nowrap; }
.count { width: 13px; height: 13px; border-radius: 50%; background: #d78ce0; color: #432249; margin: 0 17px 0 6px; text-align: center; font-size: 8px; line-height: 13px; }
```
